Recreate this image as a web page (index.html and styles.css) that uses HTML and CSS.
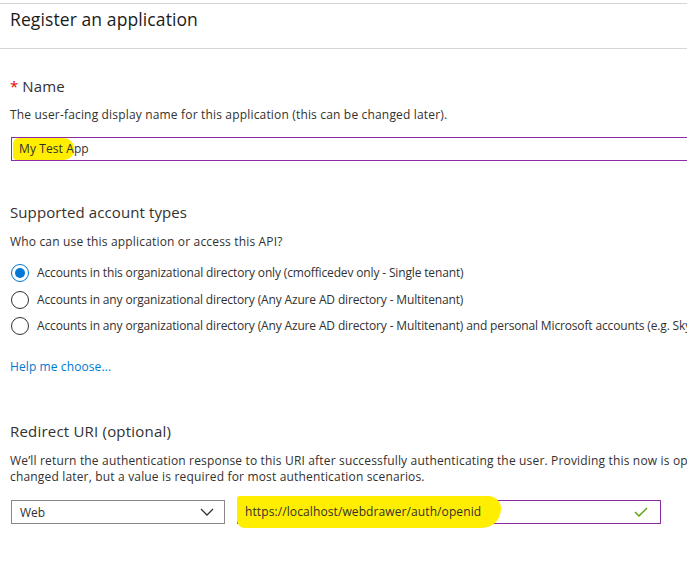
FILE: index.html
```html
<!DOCTYPE html>
<html>
<head>
<meta charset="utf-8">
<link rel="stylesheet" href="styles.css">
</head>
<body>
<div class="page">
  <header class="header">
    <h1 class="title">Register an application</h1>
  </header>
  <section class="section name-section">
    <h2 class="label"><span class="req">*</span> Name</h2>
    <p class="desc">The user-facing display name for this application (this can be changed later).</p>
    <div class="input name-input"><span class="hl hl-name">My Test A</span>pp</div>
  </section>
  <section class="section accounts-section">
    <h2 class="label">Supported account types</h2>
    <p class="desc">Who can use this application or access this API?</p>
    <div class="radios">
      <div class="radio checked"><span class="circle"></span><span>Accounts in this organizational directory only (cmofficedev only - Single tenant)</span></div>
      <div class="radio"><span class="circle"></span><span>Accounts in any organizational directory (Any Azure AD directory - Multitenant)</span></div>
      <div class="radio"><span class="circle"></span><span>Accounts in any organizational directory (Any Azure AD directory - Multitenant) and personal Microsoft accounts (e.g. Skype, Xbox)</span></div>
    </div>
    <a class="help">Help me choose...</a>
  </section>
  <section class="section redirect-section">
    <h2 class="label">Redirect URI (optional)</h2>
    <p class="desc desc2">We’ll return the authentication response to this URI after successfully authenticating the user. Providing this now is optional and it can be<br>changed later, but a value is required for most authentication scenarios.</p>
    <div class="uri-row">
      <div class="select"><span>Web</span>
        <svg width="14" height="8" viewBox="0 0 14 8"><path d="M1 1 L7 7 L13 1" fill="none" stroke="#333" stroke-width="1.3"/></svg>
      </div>
      <div class="input uri-input"><span class="hl hl-uri">https://localhost/webdrawer/auth/openid</span>
        <svg class="check" width="14" height="10" viewBox="0 0 14 10"><path d="M1 5 L5 9 L13 1" fill="none" stroke="#57a300" stroke-width="1.4"/></svg>
      </div>
    </div>
  </section>
</div>
</body>
</html>
```
FILE: styles.css
```css
* { box-sizing: border-box; }
html, body { margin: 0; padding: 0; background: #fff; overflow: hidden; }
body { font-family: "Open Sans", "Noto Sans", sans-serif; color: #323130; width: 687px; height: 562px; }
.page { padding-top: 3px; }
.header { border-top: 1px solid #d6d6d6; border-bottom: 1px solid #d6d6d6; height: 46px; padding-left: 10px; }
.title { margin: 0; font-weight: 400; font-size: 17.5px; line-height: 20px; padding-top: 5px; color: #1b1b1b; letter-spacing: 0.1px; }
.section { padding-left: 10px; }
.label { margin: 0; font-weight: 400; font-size: 15px; line-height: 20px; color: #323130; letter-spacing: 0.1px; }
.redirect-section .label { letter-spacing: 0.2px; }
.req { color: #e50000; }
.desc { margin: 0; font-size: 12px; line-height: 16px; letter-spacing: 0.17px; }
.name-section { padding-top: 27px; }
.name-section .desc { margin-top: 11px; }
.input { border: 1px solid #8a2da5; height: 24px; font-size: 12px; line-height: 22px; display: flex; align-items: center; white-space: nowrap; letter-spacing: 0.1px; }
.name-input { margin-top: 14px; width: 700px; margin-left: 1px; padding-left: 7px; }
.hl { background: #ffee00; border-radius: 6px 10px 10px 4px; }
.hl-name { margin-left: -6px; padding-left: 6px; }
.accounts-section { padding-top: 41px; }
.accounts-section .desc { margin-top: 12px; }
.radios { margin-top: 14px; display: flex; flex-direction: column; gap: 8.5px; }
.radio { display: flex; align-items: center; gap: 8px; font-size: 12px; line-height: 18px; white-space: nowrap; letter-spacing: -0.15px; }
.circle { width: 18px; height: 18px; border: 1px solid #323130; border-radius: 50%; flex: none; margin-left: 1px; display: flex; align-items: center; justify-content: center; }
.radio.checked .circle { border-color: #0078d4; }
.radio.checked .circle::after { content: ""; width: 10px; height: 10px; border-radius: 50%; background: #0078d4; }
.help { display: block; margin-top: 24px; color: #0078d4; font-size: 12px; line-height: 16px; letter-spacing: 0.1px; }
.redirect-section { padding-top: 46px; }
.redirect-section .desc2 { margin-top: 12px; white-space: nowrap; }
.uri-row { display: flex; gap: 12px; margin-top: 15px; margin-left: 1px; }
.select { width: 214px; height: 24px; border: 1px solid #8a8886; display: flex; align-items: center; justify-content: space-between; padding: 0 10px 0 8px; font-size: 12px; }
.uri-input { width: 424px; padding: 0 12px 0 7px; justify-content: space-between; }
.hl-uri { margin-left: -8px; padding: 5px 20px 5px 8px; border-radius: 4px 20px 30px 12px; }
.check { flex: none; }
```
